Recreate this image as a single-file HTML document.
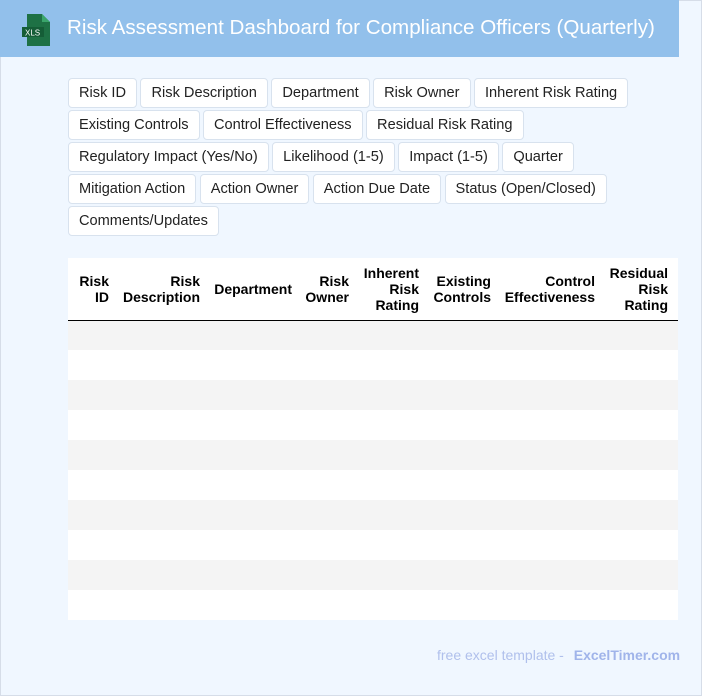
<!DOCTYPE html>
<html><head><meta charset="utf-8"><style>
*{box-sizing:border-box;margin:0;padding:0}
body{width:702px;height:696px;background:#f0f7ff;font-family:"Liberation Sans",sans-serif;position:relative;overflow:hidden;border:1px solid #d6dde8}
.hdr{position:absolute;left:-1px;top:-1px;width:679px;height:57px;background:#92c0eb}
.hdr h1{position:absolute;left:67px;top:16px;font-size:20.6px;font-weight:normal;color:#fff;white-space:nowrap}
.icon{position:absolute;left:22px;top:14px;width:28px;height:32px}
.tags{position:absolute;left:67px;top:77px;width:610px}
.tag{display:inline-block;height:30px;line-height:28px;padding:0 10px;margin:0 0 2px 0;border:1px solid #d8e2ee;border-radius:4px;background:#fff;font-size:14.6px;color:#222;margin-right:-1px}
.row{height:32px;white-space:nowrap}
table{position:absolute;left:67px;top:257px;width:610px;border-collapse:collapse;background:#fff}
th{font-size:14px;font-weight:bold;text-align:right;padding:0 10px 0 0;height:62px;border-bottom:1.5px solid #000;line-height:16px;vertical-align:middle}
td{height:30px}
tr.g td{background:#f4f4f4}
.ft{position:absolute;left:436px;top:646px;font-size:14px;color:#b0c0ec}
.ft b{color:#a0b4ea;margin-left:6px}
</style></head><body>
<div class="hdr">
<svg class="icon" viewBox="0 0 28 32"><path d="M5 0h15l8 8v24H5z" fill="#1e7145"/><path d="M20 0v8h8z" fill="#3aa56b"/><rect x="0" y="13" width="22" height="10" fill="#155d37"/><text x="3" y="21.5" font-size="8" fill="#fff" font-family="Liberation Sans">XLS</text></svg>
<h1>Risk Assessment Dashboard for Compliance Officers (Quarterly)</h1>
</div>
<div class="tags">
<div class="row"><span class="tag">Risk ID</span> <span class="tag">Risk Description</span> <span class="tag">Department</span> <span class="tag">Risk Owner</span> <span class="tag">Inherent Risk Rating</span></div>
<div class="row"><span class="tag">Existing Controls</span> <span class="tag">Control Effectiveness</span> <span class="tag">Residual Risk Rating</span></div>
<div class="row"><span class="tag">Regulatory Impact (Yes/No)</span> <span class="tag">Likelihood (1-5)</span> <span class="tag">Impact (1-5)</span> <span class="tag">Quarter</span></div>
<div class="row"><span class="tag">Mitigation Action</span> <span class="tag">Action Owner</span> <span class="tag">Action Due Date</span> <span class="tag">Status (Open/Closed)</span></div>
<div class="row"><span class="tag">Comments/Updates</span></div>
</div>
<table>
<tr><th style="width:51px">Risk<br>ID</th><th style="width:91px">Risk<br>Description</th><th style="width:92px">Department</th><th style="width:57px">Risk<br>Owner</th><th style="width:70px">Inherent<br>Risk<br>Rating</th><th style="width:72px">Existing<br>Controls</th><th style="width:104px">Control<br>Effectiveness</th><th>Residual<br>Risk<br>Rating</th></tr>
<tr class="g"><td colspan="8"></td></tr><tr><td colspan="8"></td></tr>
<tr class="g"><td colspan="8"></td></tr><tr><td colspan="8"></td></tr>
<tr class="g"><td colspan="8"></td></tr><tr><td colspan="8"></td></tr>
<tr class="g"><td colspan="8"></td></tr><tr><td colspan="8"></td></tr>
<tr class="g"><td colspan="8"></td></tr><tr><td colspan="8"></td></tr>
</table>
<div class="ft">free excel template - <b>ExcelTimer.com</b></div>
</body></html>
